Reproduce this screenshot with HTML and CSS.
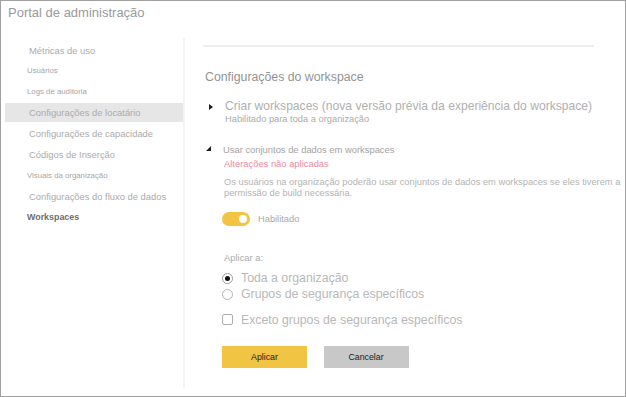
FILE: index.html
```html
<!DOCTYPE html>
<html lang="pt-BR">
<head>
    <meta charset="UTF-8">
    <meta name="viewport" content="width=device-width, initial-scale=1.0">
    <title>Portal de administração</title>
    <link rel="stylesheet" href="styles.css">
</head>
<body>
    <div class="frame">
        <header class="portal-title">Portal de administração</header>

        <div class="layout">
            <nav class="sidebar">
                <a class="nav-item">Métricas de uso</a>
                <a class="nav-item nav-small">Usuários</a>
                <a class="nav-item nav-small">Logs de auditoria</a>
                <a class="nav-item active">Configurações de locatário</a>
                <a class="nav-item">Configurações de capacidade</a>
                <a class="nav-item">Códigos de Inserção</a>
                <a class="nav-item nav-small">Visuais da organização</a>
                <a class="nav-item">Configurações do fluxo de dados</a>
                <a class="nav-item nav-strong">Workspaces</a>
            </nav>

            <main class="content">
                <div class="divider"></div>
                <h2 class="page-heading">Configurações do workspace</h2>

                <section class="setting">
                    <span class="caret caret-right"></span>
                    <div class="setting-body">
                        <div class="setting-title large">Criar workspaces (nova versão prévia da experiência do workspace)</div>
                        <div class="setting-status">Habilitado para toda a organização</div>
                    </div>
                </section>

                <section class="setting setting-open">
                    <span class="caret caret-down"></span>
                    <div class="setting-body">
                        <div class="setting-title">Usar conjuntos de dados em workspaces</div>
                        <div class="pending">Alterações não aplicadas</div>
                        <p class="setting-desc">Os usuários na organização poderão usar conjuntos de dados em workspaces se eles tiverem a<br>permissão de build necessária.</p>

                        <div class="toggle-row">
                            <span class="toggle"><span class="knob"></span></span>
                            <span class="toggle-label">Habilitado</span>
                        </div>

                        <div class="apply-label">Aplicar a:</div>
                        <div class="option">
                            <span class="radio checked"></span>
                            <span>Toda a organização</span>
                        </div>
                        <div class="option">
                            <span class="radio"></span>
                            <span>Grupos de segurança específicos</span>
                        </div>
                        <div class="option option-check">
                            <span class="checkbox"></span>
                            <span>Exceto grupos de segurança específicos</span>
                        </div>

                        <div class="actions">
                            <button class="btn btn-primary">Aplicar</button>
                            <button class="btn btn-secondary">Cancelar</button>
                        </div>
                    </div>
                </section>
            </main>
        </div>
    </div>
</body>
</html>
```

FILE: styles.css
```css
* {
    margin: 0;
    padding: 0;
    box-sizing: border-box;
}

body {
    font-family: 'Liberation Sans', Arial, sans-serif;
    background: #ffffff;
}

.frame {
    width: 626px;
    height: 397px;
    border: 1px solid #a0a0a0;
    overflow: hidden;
    background: #ffffff;
}

.portal-title {
    font-size: 13px;
    line-height: 16px;
    padding: 4px 0 0 7px;
    color: #9a9a9a;
}

.layout {
    display: flex;
    margin-top: 17px;
}

/* Sidebar */
.sidebar {
    width: 184px;
    height: 350px;
    flex-shrink: 0;
    border-right: 2px solid #f3f3f3;
    padding-top: 2.5px;
}

.nav-item {
    display: block;
    height: 19px;
    line-height: 19px;
    margin: 0 0 1.9px 4px;
    padding-left: 24px;
    font-size: 9.4px;
    color: #ababab;
    white-space: nowrap;
}

.nav-small {
    font-size: 7.8px;
    padding-left: 22px;
    color: #a6a6a6;
}

.nav-strong {
    font-size: 8.9px;
    font-weight: bold;
    padding-left: 22px;
    color: #6e6e6e;
}

.nav-item.active {
    background: #e6e6e6;
}

/* Main content */
.content {
    flex: 1;
    padding-left: 18px;
}

.divider {
    width: 391px;
    height: 2px;
    margin-top: 7px;
    background: #eeeeee;
}

.page-heading {
    margin-top: 22px;
    padding-left: 2px;
    font-size: 12.3px;
    line-height: 16px;
    font-weight: normal;
    color: #939393;
}

.setting {
    display: grid;
    grid-template-columns: 20px 1fr;
    margin-top: 15px;
}

.setting-open {
    margin-top: 18.5px;
}

.caret {
    width: 0;
    height: 0;
}

.caret-right {
    margin: 3.5px 0 0 6px;
    border-left: 4px solid #1e1e1e;
    border-top: 3px solid transparent;
    border-bottom: 3px solid transparent;
}

.caret-down {
    margin: 2px 0 0 3px;
    border-left: 5px solid transparent;
    border-bottom: 5px solid #1e1e1e;
}

.setting-title {
    font-size: 9.4px;
    line-height: 12px;
    color: #a3a3a3;
    white-space: nowrap;
}

.setting-title.large {
    font-size: 12.1px;
    line-height: 13px;
    padding-left: 2px;
    color: #b0b0b0;
}

.setting-status {
    font-size: 9.3px;
    line-height: 12px;
    padding-left: 2px;
    color: #ababab;
}

.pending {
    margin-top: 2px;
    padding-left: 1px;
    font-size: 9.4px;
    line-height: 12px;
    color: #f08aa0;
}

.setting-desc {
    margin-top: 7.5px;
    padding-left: 1px;
    font-size: 9.3px;
    line-height: 11px;
    color: #b3b3b3;
    white-space: nowrap;
}

.toggle-row {
    display: flex;
    align-items: center;
    gap: 8px;
    margin: 13px 0 0 -1px;
}

.toggle {
    display: flex;
    align-items: center;
    justify-content: flex-end;
    width: 28px;
    height: 14px;
    padding-right: 3px;
    border-radius: 7px;
    background: #f2c443;
}

.knob {
    width: 8px;
    height: 8px;
    border-radius: 50%;
    background: #ffffff;
}

.toggle-label {
    font-size: 9.3px;
    color: #a8a8a8;
}

.apply-label {
    margin-top: 26px;
    padding-left: 1px;
    font-size: 9.4px;
    line-height: 12px;
    color: #ababab;
}

.option {
    display: flex;
    align-items: center;
    gap: 8px;
    margin-left: -1px;
    height: 16px;
    font-size: 12.3px;
    color: #b8b8b8;
    white-space: nowrap;
}

.apply-label + .option {
    margin-top: 6px;
}

.option-check {
    margin-top: 9.5px;
}

.radio {
    width: 11px;
    height: 11px;
    flex-shrink: 0;
    border: 1.5px solid #9c9c9c;
    border-radius: 50%;
    display: flex;
    align-items: center;
    justify-content: center;
}

.radio.checked::after {
    content: '';
    width: 5px;
    height: 5px;
    border-radius: 50%;
    background: #111111;
}

.radio:not(.checked) {
    border-color: #b5b5b5;
}

.checkbox {
    width: 11px;
    height: 11px;
    flex-shrink: 0;
    border: 1.5px solid #acacac;
    border-radius: 2px;
}

.actions {
    display: flex;
    gap: 16.5px;
    margin: 18.5px 0 0 -1px;
}

.btn {
    width: 85px;
    height: 22px;
    border: none;
    font-family: 'Liberation Sans', Arial, sans-serif;
    font-size: 8.8px;
    color: #1a1a1a;
    cursor: pointer;
}

.btn-primary {
    background: #f2c443;
}

.btn-secondary {
    background: #c8c8c8;
}
```
